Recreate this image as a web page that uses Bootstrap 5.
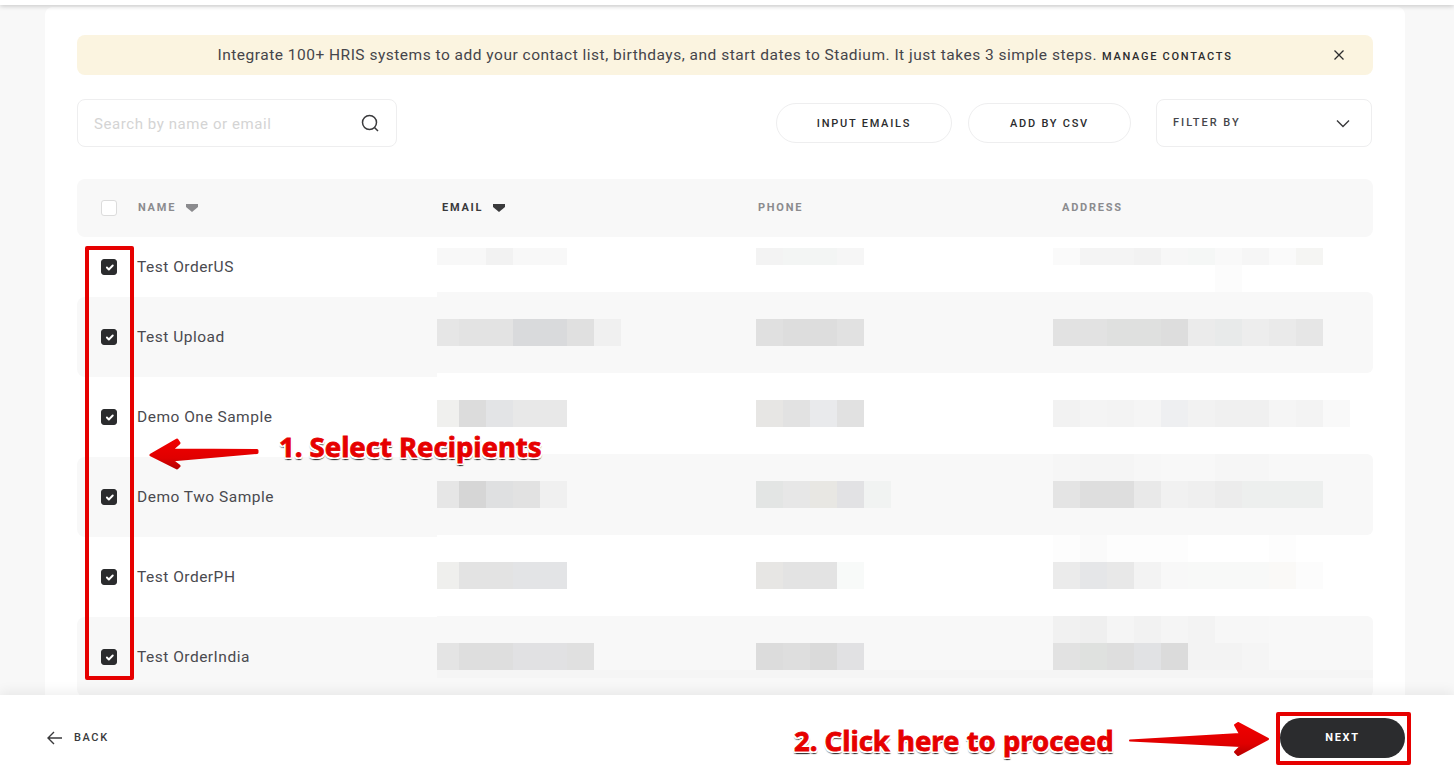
<!DOCTYPE html>
<html lang="en">
<head>
<meta charset="utf-8">
<title>Select recipients</title>
<link rel="stylesheet" href="https://cdn.jsdelivr.net/npm/bootstrap@5.3.0/dist/css/bootstrap.min.css">
<style>
html,body{height:100%}
body{background:#f8f8f8;font-family:"Roboto","Liberation Sans",sans-serif;color:#3a3a3c;overflow:hidden;position:relative}
.top-strip{height:5px;background:#fff;box-shadow:0 1px 5px rgba(0,0,0,.22);position:relative;z-index:2}
.page-main{height:690px;overflow:hidden;padding:2px 49px 0 45px}
.sheet{background:#fff;border-radius:8px 8px 0 0;padding:28px 32px 0;height:700px}
.notice{height:40px;background:#fbf4e0;border:0;border-radius:8px;margin:0 0 24px;padding:2px 0 0;font-size:15.5px;letter-spacing:.5px;color:#45454a;position:relative}
.notice-link{font-size:11px;font-weight:500;letter-spacing:1.72px;color:#2b2c2e;margin-left:5px}
.notice-x{position:absolute;left:1256px;top:14px;width:12px;height:12px}
.toolbar{height:48px;margin-bottom:32px;width:1295px}
.search-box{width:320px;height:48px;border:1px solid #eeeeef;border-radius:8px;padding:0 16px 0 16px}
.search-box input{border:0;outline:0;padding:2px 0 0;flex:1;min-width:0;font-size:15px;letter-spacing:.58px;background:transparent}
.search-box input::placeholder{color:#d4d4d4;opacity:1}
.tool-btn{height:40px;border:1px solid #eeeeef;background:#fff;font-size:11px;font-weight:500;letter-spacing:1.75px;color:#2b2c2e;padding:2px 0 0;border-radius:20px}
.tool-btn.wide{width:176px;margin-right:16px}
.tool-btn.mid{width:163px;margin-right:25px}
.filter-box{width:216px;height:48px;border:1px solid #eeeeef;border-radius:8px;padding:0 21px 0 16px;font-size:11px;font-weight:500;letter-spacing:2px;color:#45454a}
.list-head{height:58px;background:#f8f8f8;border-radius:8px;width:1296px;font-size:11px;font-weight:700;letter-spacing:1.75px;color:#8b8b8e;position:relative}
.head-cell{position:absolute;top:0;height:58px;display:flex;align-items:center;gap:10px}
.head-cell.cur{color:#3a3a3c}
.tick-box.form-check-input{width:16px;height:16px;margin:0;border-radius:3px;border-color:#dcdcdc;flex:none}
.tick-box.form-check-input:checked{background-color:#2b2c2e;border-color:#2b2c2e;background-size:13px}
.list-body{width:1296px}
.name-col{width:360px;flex:none}
.person{height:80px;padding-left:24px;gap:20px;font-size:15.5px;letter-spacing:.5px;color:#4a4a4f;border-radius:8px 0 0 8px}
.person span{padding-top:2px}
.person.first{height:60px}
.person.alt{background:#f8f8f8}
.mosaic{display:block;flex:none}
.page-foot{position:absolute;left:0;right:0;top:695px;height:83px;background:#fff;box-shadow:0 -3px 12px rgba(0,0,0,.07);padding:3px 49px 0 47px;z-index:2}
.back-link{gap:12px;font-size:11px;font-weight:500;letter-spacing:1.6px;color:#3a3a3c}
.next-btn{width:125px;height:40px;border-radius:20px;background:#2b2c2e;border:0;color:#fff;font-size:11px;font-weight:700;letter-spacing:1.7px;padding:0}
.red-frame{position:absolute;border:4px solid #e60000;border-radius:2px;z-index:3;pointer-events:none}
.frame-a{left:85px;top:246px;width:49px;height:434px}
.frame-b{left:1276px;top:712px;width:135px;height:53px}
.callout{position:absolute;z-index:4;font-family:"Noto Sans","Open Sans",sans-serif;font-weight:700;font-size:27.5px;line-height:1;color:#e60000;-webkit-text-stroke:.8px #e60000;white-space:nowrap;
  text-shadow:2px 0 0 #fff,-2px 0 0 #fff,0 2px 0 #fff,0 -2px 0 #fff,1.5px 1.5px 0 #fff,-1.5px 1.5px 0 #fff,1.5px -1.5px 0 #fff,-1.5px -1.5px 0 #fff,1px 3px 1px rgba(0,0,0,.7),-1px 3px 1px rgba(0,0,0,.45)}
.call-a{left:279px;top:433px}
.call-b{left:794px;top:727px}
.red-arrow{position:absolute;z-index:4;left:0;top:0;pointer-events:none}
</style>
</head>
<body>
<div class="top-strip"></div>
<main class="page-main">
  <div class="sheet">
    <div class="alert notice d-flex align-items-center justify-content-center" role="alert">
      <span>Integrate 100+ HRIS systems to add your contact list, birthdays, and start dates to Stadium. It just takes 3 simple steps.<span class="notice-link">MANAGE CONTACTS</span></span>
      <svg class="notice-x" viewBox="0 0 12 12"><path d="M1.5 1.5l9 9M10.5 1.5l-9 9" stroke="#2b2c2e" stroke-width="1.3" fill="none"/></svg>
    </div>
    <div class="toolbar d-flex align-items-center">
      <div class="search-box d-flex align-items-center">
        <input type="text" placeholder="Search by name or email" aria-label="Search">
        <svg width="20" height="20" viewBox="0 0 20 20"><circle cx="9.5" cy="9.5" r="7" fill="none" stroke="#3a3a3c" stroke-width="1.5"/><path d="M14.5 14.5l3.5 3.5" stroke="#3a3a3c" stroke-width="1.5"/></svg>
      </div>
      <button class="btn tool-btn wide ms-auto">INPUT EMAILS</button>
      <button class="btn tool-btn mid">ADD BY CSV</button>
      <div class="filter-box d-flex align-items-center justify-content-between">
        <span>FILTER BY</span>
        <svg width="14" height="9" viewBox="0 0 14 9"><path d="M1 1.5l6 6 6-6" fill="none" stroke="#3a3a3c" stroke-width="1.4"/></svg>
      </div>
    </div>
    <div class="list-head">
      <div class="head-cell" style="left:24px"><input class="form-check-input tick-box" type="checkbox" aria-label="All"></div>
      <div class="head-cell" style="left:61px"><span>NAME</span><svg width="12" height="8" viewBox="0 0 12 8"><path d="M0 0h12v3L6 8 0 3z" fill="#8b8b8e"/></svg></div>
      <div class="head-cell cur" style="left:365px"><span>EMAIL</span><svg width="12" height="8" viewBox="0 0 12 8"><path d="M0 0h12v3L6 8 0 3z" fill="#3a3a3c"/></svg></div>
      <div class="head-cell" style="left:681px"><span>PHONE</span></div>
      <div class="head-cell" style="left:985px"><span>ADDRESS</span></div>
    </div>
    <div class="list-body d-flex">
      <div class="name-col">
        <div class="person first d-flex align-items-center"><input class="form-check-input tick-box" type="checkbox" checked aria-label="Select"><span>Test OrderUS</span></div>
        <div class="person alt d-flex align-items-center"><input class="form-check-input tick-box" type="checkbox" checked aria-label="Select"><span>Test Upload</span></div>
        <div class="person d-flex align-items-center"><input class="form-check-input tick-box" type="checkbox" checked aria-label="Select"><span>Demo One Sample</span></div>
        <div class="person alt d-flex align-items-center"><input class="form-check-input tick-box" type="checkbox" checked aria-label="Select"><span>Demo Two Sample</span></div>
        <div class="person d-flex align-items-center"><input class="form-check-input tick-box" type="checkbox" checked aria-label="Select"><span>Test OrderPH</span></div>
        <div class="person alt d-flex align-items-center"><input class="form-check-input tick-box" type="checkbox" checked aria-label="Select"><span>Test OrderIndia</span></div>
      </div>
      <svg class="mosaic" width="936" height="460" viewBox="437 237 936 460" shape-rendering="crispEdges" id="mosaic" aria-hidden="true"></svg>
    </div>
  </div>
</main>
<footer class="page-foot d-flex align-items-center justify-content-between">
  <div class="back-link d-flex align-items-center">
    <svg width="15" height="14" viewBox="0 0 15 14"><path d="M7 1L1 7l6 6M1 7h14" fill="none" stroke="#3a3a3c" stroke-width="1.4"/></svg>
    <span>BACK</span>
  </div>
  <button class="btn next-btn">NEXT</button>
</footer>
<div class="red-frame frame-a"></div>
<div class="red-frame frame-b"></div>
<div class="callout call-a">1. Select Recipients</div>
<div class="callout call-b">2. Click here to proceed</div>
<svg class="red-arrow" width="1454" height="778" viewBox="0 0 1454 778" aria-hidden="true">
  <defs>
    <linearGradient id="ga" x1="0" y1="0" x2="0" y2="1"><stop offset="0" stop-color="#f00000"/><stop offset=".65" stop-color="#e00000"/><stop offset="1" stop-color="#b80000"/></linearGradient>
  </defs>
  <path d="M151 455L177 440 179 443 171 450 257 450.5 257 452.5 171 460 179 466 177 468z" fill="url(#ga)" stroke="url(#ga)" stroke-width="3" stroke-linejoin="round"/>
  <path d="M1130 740.5L1240 734 1235 725 1238 723 1268 739 1238 755 1235 752 1241 746z" fill="url(#ga)" stroke="url(#ga)" stroke-width="2" stroke-linejoin="round"/>
</svg>
<script>
/* Pixelated (redacted) contact data: [y, height, [[x, x2, colour], ...]] */
var rows=[
[248,17,[[437,459,'f8f8f8'],[459,486,'f8f8f8'],[486,513,'f2f2f2'],[513,567,'f8f8f8'],[756,783,'f3f3f3'],[783,837,'f3f5f4'],[837,864,'f6f6f6'],[1053,1080,'fafafa'],[1080,1134,'f4f4f4'],[1134,1161,'f2f2f2'],[1161,1188,'f7f7f7'],[1188,1215,'f5f7f6'],[1215,1242,'f9f9f9'],[1242,1269,'f6f6f6'],[1269,1296,'fafafa'],[1296,1323,'f5f5f3']]],
[265,27,[[1215,1242,'fcfcfc']]],
[319,27,[[437,459,'e6e6e6'],[459,513,'e3e3e3'],[513,567,'d9dadc'],[567,594,'e0e0e0'],[594,621,'f0f0f0'],[756,783,'e0e0e0'],[783,837,'dddddd'],[837,864,'e1e1e1'],[1053,1107,'e2e2e2'],[1107,1161,'dfe0df'],[1161,1188,'dddddd'],[1188,1215,'ebebeb'],[1215,1242,'e8eaea'],[1242,1269,'ededed'],[1269,1296,'eaeaea'],[1296,1323,'e6e6e6']]],
[400,27,[[437,459,'f0f0ee'],[459,486,'dcdcdc'],[486,513,'e3e4e6'],[513,567,'e8e8e8'],[756,783,'e7e6e4'],[783,810,'e2e2e2'],[810,837,'e9eaec'],[837,864,'e1e1e1'],[1053,1080,'f2f2f2'],[1080,1107,'f4f4f4'],[1107,1134,'f3f3f3'],[1134,1161,'f5f5f5'],[1161,1188,'eeeff1'],[1188,1215,'f2f2f2'],[1215,1269,'f0f0f0'],[1269,1296,'f5f5f5'],[1296,1323,'f3f3f3'],[1323,1350,'f9f9f9']]],
[454,27,[[1053,1080,'f6f6f6'],[1080,1134,'f5f5f5'],[1134,1161,'f7f7f7'],[1215,1269,'f6f6f6']]],
[481,27,[[437,459,'e6e6e6'],[459,486,'d6d6d6'],[486,513,'dfe0e1'],[513,540,'e2e2e2'],[540,567,'f0f0f0'],[756,783,'e3e5e4'],[783,810,'e7e7e7'],[810,837,'e8e7e3'],[837,864,'e2e2e4'],[864,891,'f1f3f2'],[1053,1080,'e4e4e4'],[1080,1134,'dedede'],[1134,1161,'e9e9e9'],[1161,1188,'f1f1f1'],[1188,1215,'efefef'],[1215,1242,'ececec'],[1242,1323,'edefee']]],
[535,27,[[1053,1080,'fdfdfd'],[1080,1107,'fafafa'],[1107,1188,'fdfdfd'],[1269,1296,'fdfdfd']]],
[562,27,[[437,459,'efefed'],[459,513,'e3e3e3'],[513,567,'e3e4e6'],[756,783,'e7e6e4'],[783,837,'e3e3e3'],[837,864,'f8faf9'],[1053,1080,'ebebeb'],[1080,1107,'e5e6e8'],[1107,1134,'e8e8e8'],[1134,1161,'f3f3f3'],[1161,1188,'f8f8f8'],[1188,1269,'f8f9f8'],[1269,1296,'faf9f7'],[1296,1323,'fcfcfc']]],
[616,27,[[1053,1080,'f1f1f1'],[1080,1107,'efefef'],[1107,1134,'f5f5f5'],[1134,1161,'f2f2f2'],[1161,1188,'f5f5f5'],[1188,1215,'f3f3f3'],[1215,1269,'f7f7f7']]],
[643,27,[[437,459,'e4e4e4'],[459,513,'dedede'],[513,567,'e1e1e3'],[567,594,'e0e0e0'],[756,783,'dcdcdc'],[783,810,'dedede'],[810,837,'dadada'],[837,864,'e1e1e3'],[1053,1080,'e2e2e2'],[1080,1107,'dfe1df'],[1107,1134,'dedede'],[1134,1161,'e1e2e4'],[1161,1188,'dbdbdb'],[1188,1242,'f3f3f3'],[1242,1269,'f5f5f5']]],
[670,8,[[437,1373,'f5f5f5']]]
];
var s='';
[[292,81],[454,81],[616,81]].forEach(function(b){s+='<rect x="420" y="'+b[0]+'" width="953" height="'+b[1]+'" rx="6" fill="#f8f8f8" shape-rendering="auto"/>';});
rows.forEach(function(r){r[2].forEach(function(c){s+='<rect x="'+c[0]+'" y="'+r[0]+'" width="'+(c[1]-c[0])+'" height="'+r[1]+'" fill="#'+c[2]+'"/>';});});
document.getElementById('mosaic').innerHTML=s;
</script>
<script src="https://cdn.jsdelivr.net/npm/bootstrap@5.3.0/dist/js/bootstrap.bundle.min.js"></script>
</body>
</html>
